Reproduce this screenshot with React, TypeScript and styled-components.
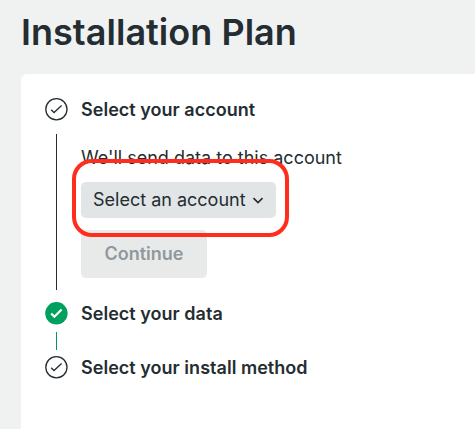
import React from 'react';
import styled, { createGlobalStyle } from 'styled-components';

const GlobalStyle = createGlobalStyle`
  * { box-sizing: border-box; }
  body { margin: 0; background: #f0f2f2; color: #232d32; font-family: Inter, "Liberation Sans", sans-serif; overflow: hidden; }
`;

const Page = styled.main`
  height: 429px;
  padding: 12px 0 0 21px;
  display: flex;
  flex-direction: column;
`;

const Title = styled.h1`
  margin: 0 0 22px;
  font-size: 36px;
  line-height: 40px;
  font-weight: 600;
  letter-spacing: 0.03px;
  white-space: nowrap;
`;

const Card = styled.section`
  flex: 1;
  background: #fff;
  border-radius: 6px 0 0 0;
  padding: 24px 24px 0;
`;

const Step = styled.div<{ $height: number }>`
  display: grid;
  grid-template-columns: 23px 1fr;
  column-gap: 13px;
  height: ${(p) => p.$height}px;
`;

const Rail = styled.div`
  display: flex;
  flex-direction: column;
  align-items: center;
`;

const Line = styled.div<{ $done?: boolean }>`
  width: 1px;
  flex: 1;
  margin: ${(p) => (p.$done ? '7px 0 6px' : '13px 0 12px')};
  background: ${(p) => (p.$done ? '#00995c' : '#232d32')};
`;

const Heading = styled.h2`
  margin: 0;
  font-size: 18px;
  line-height: 24px;
  font-weight: 600;
  letter-spacing: 0.03px;
  white-space: nowrap;
`;

const Content = styled.div`
  display: flex;
  flex-direction: column;
  align-items: flex-start;
`;

const Hint = styled.p`
  margin: 24px 0 12px;
  font-size: 18px;
  line-height: 24px;
`;

const SelectWrap = styled.div`
  position: relative;
  margin-bottom: 12px;
`;

const Select = styled.button`
  display: flex;
  align-items: center;
  gap: 6px;
  width: 195px;
  height: 36px;
  padding: 0 12px;
  border: 0;
  border-radius: 5px;
  background: #e2e5e6;
  color: inherit;
  font: 400 18px/24px Inter, sans-serif;
  white-space: nowrap;
`;

const Highlight = styled.div`
  position: absolute;
  left: -9px;
  top: -23px;
  width: 217px;
  height: 78px;
  border: 4px solid #ff2d1e;
  border-radius: 20px;
`;

const Continue = styled.button`
  width: 126px;
  height: 48px;
  border: 0;
  border-radius: 5px;
  background: #e8eaea;
  color: #90989b;
  font: 600 18px/24px Inter, sans-serif;
`;

const Icon = styled.svg`
  display: block;
  flex: none;
`;

const StepIcon = ({ done = false }: { done?: boolean }) => (
  <Icon width="23" height="23" viewBox="0 0 23 23" fill="none">
    <circle cx="11.4" cy="11.3" r={done ? 11.2 : 10.6} fill={done ? '#00a05f' : '#fff'} stroke={done ? 'none' : '#232d32'} strokeWidth="1.3" />
    <path
      d={done ? 'M6.2 11.5l3.200 3.200L16.600 7.500' : 'M6.200 11.700l2.800 2.800L16.600 7.600'}
      stroke={done ? '#fff' : '#232d32'}
      strokeWidth={done ? 2.2 : 1.3}
    />
  </Icon>
);

export default function App() {
  return (
    <>
      <GlobalStyle />
      <Page>
        <Title>Installation Plan</Title>
        <Card>
          <Step $height={204}>
            <Rail><StepIcon /><Line /></Rail>
            <Content>
              <Heading>Select your account</Heading>
              <Hint>We'll send data to this account</Hint>
              <SelectWrap>
                <Select>
                  Select an account
                  <svg width="12" height="12" viewBox="0 0 12 12" fill="none"><path d="M1.5 4.200l4.500 4.300L10.500 4.200" stroke="#232d32" strokeWidth="1.7" /></svg>
                </Select>
                <Highlight />
              </SelectWrap>
              <Continue disabled>Continue</Continue>
            </Content>
          </Step>
          <Step $height={54}>
            <Rail><StepIcon done /><Line $done /></Rail>
            <Heading>Select your data</Heading>
          </Step>
          <Step $height={24}>
            <Rail><StepIcon /></Rail>
            <Heading>Select your install method</Heading>
          </Step>
        </Card>
      </Page>
    </>
  );
}
